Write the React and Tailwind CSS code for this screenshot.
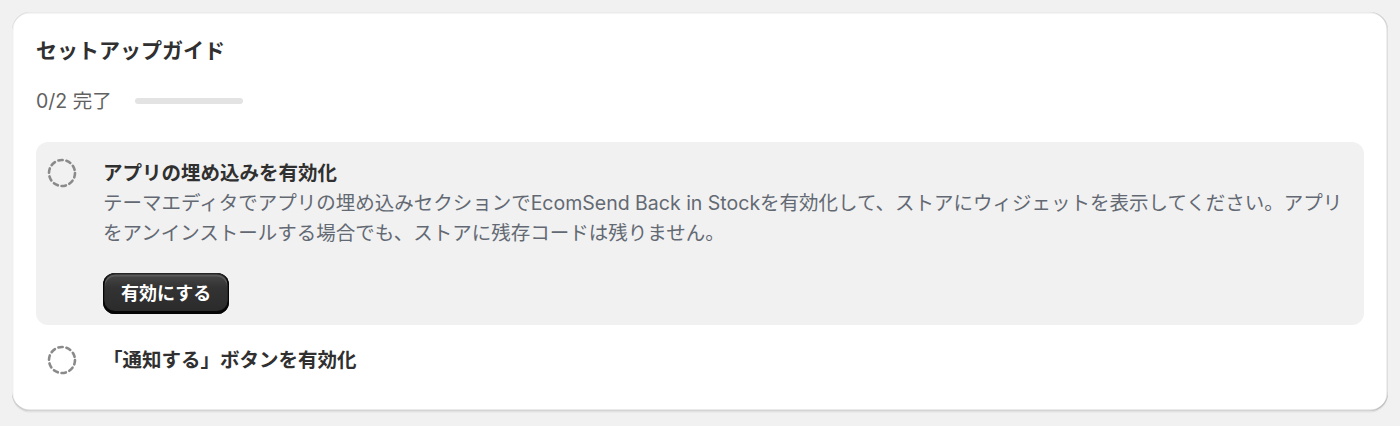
import React from "react";

const FONT =
  'font-["Inter","Noto_Sans_CJK_JP","Noto_Sans",sans-serif]';

// Dashed "incomplete" step marker
function DashedCircle() {
  return (
    <svg width="30" height="30" viewBox="0 0 30 30" fill="none">
      <circle
        cx="15"
        cy="15"
        r="13"
        stroke="#8a8a8a"
        strokeWidth="2.6"
        strokeDasharray="4.4 3.77"
        strokeLinecap="round"
      />
    </svg>
  );
}

function Step({ title, description, action, open }) {
  return (
    <div
      className={
        open
          ? "flex gap-[20px] rounded-[12px] bg-[#f1f1f1] pl-[11px] pr-[12px] pt-[16px] pb-[11px]"
          : "flex gap-[20px] rounded-[12px] pl-[11px] pr-[12px] pt-[12px] pb-[12px]"
      }
    >
      <div className="flex h-[30px] w-[36px] shrink-0 items-center justify-start">
        <DashedCircle />
      </div>
      <div className="min-w-0 flex-1">
        <div className="text-[19.5px] leading-[30px] font-bold text-[#303030]">
          {title}
        </div>
        {open && (
          <>
            <p className="text-[19.5px] leading-[30px] text-[#636973]">
              {description}
            </p>
            <button className="mt-[25px] h-[41px] rounded-[12px] bg-[linear-gradient(180deg,#4a4a4a_0%,#333333_35%,#2a2a2a_100%)] px-[18px] text-[18px] font-bold text-white shadow-[inset_0_-1.5px_0_1.5px_rgba(0,0,0,0.85),inset_0_0_0_1.5px_#262626,inset_0_1.5px_0_2px_#5a5a5a]">
              {action}
            </button>
          </>
        )}
      </div>
    </div>
  );
}

export default function App() {
  return (
    <div className={`min-h-screen bg-[#f1f1f1] px-[12px] pt-[12px] ${FONT}`}>
      <div className="rounded-[18px] bg-white p-[24px] shadow-[0_1.5px_0_0_rgba(26,26,26,0.07),inset_1.5px_0_0_0_rgba(0,0,0,0.06),inset_-1.5px_0_0_0_rgba(0,0,0,0.13),inset_0_-1.5px_0_0_rgba(0,0,0,0.17),inset_0_1.5px_0_0_rgba(204,204,204,0.4)]">
        {/* Header */}
        <h2 className="text-[21px] leading-[30px] font-bold text-[#303030]">
          セットアップガイド
        </h2>
        <div className="mt-[20px] flex items-center gap-[23px]">
          <span className="text-[19.5px] leading-[30px] text-[#616161]">
            0/2 完了
          </span>
          <div className="h-[6px] w-[108px] rounded-full bg-[#e3e3e3]" />
        </div>

        {/* Steps */}
        <div className="mt-[26px] flex flex-col gap-[8px]">
          <Step
            open
            title="アプリの埋め込みを有効化"
            description="テーマエディタでアプリの埋め込みセクションでEcomSend Back in Stockを有効化して、ストアにウィジェットを表示してください。アプリをアンインストールする場合でも、ストアに残存コードは残りません。"
            action="有効にする"
          />
          <Step title="「通知する」ボタンを有効化" />
        </div>
      </div>
    </div>
  );
}
